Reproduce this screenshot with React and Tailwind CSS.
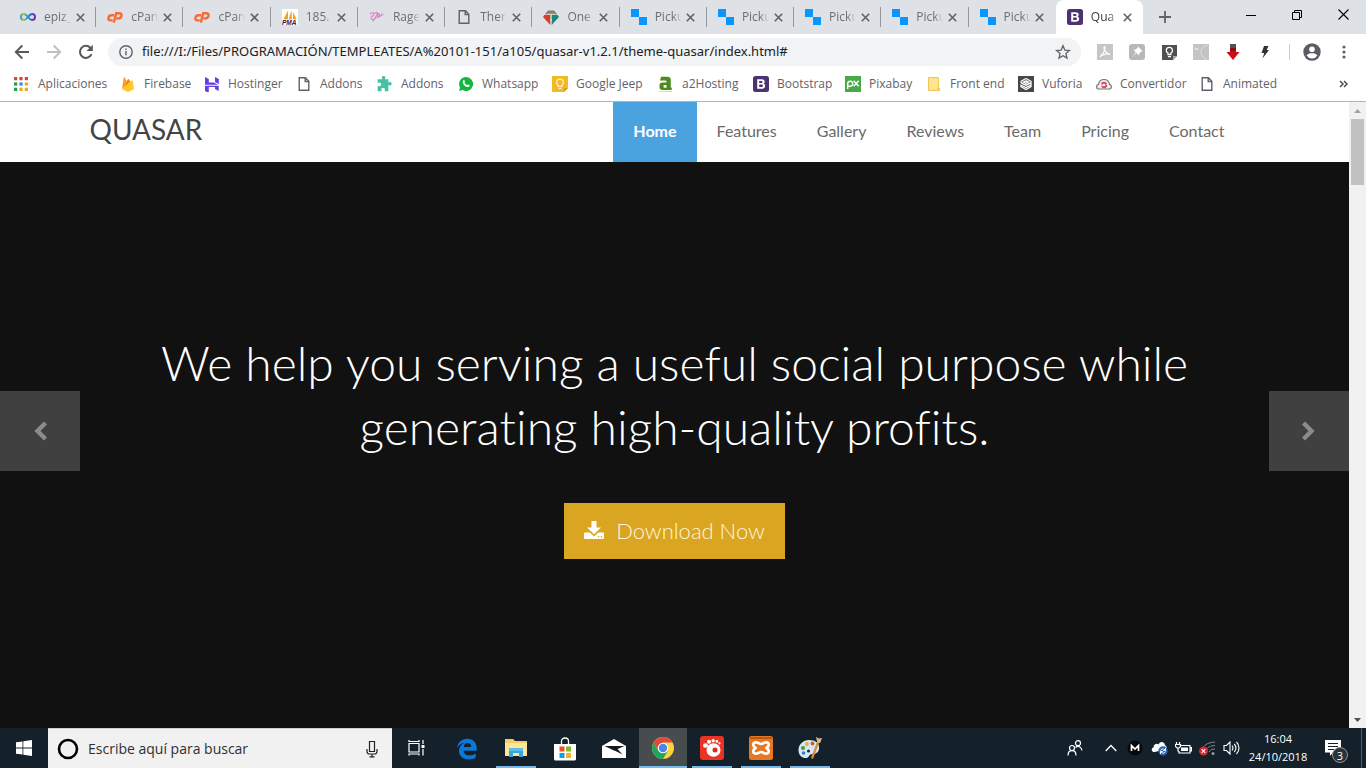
import React from "react";

/* ---------- favicons and small glyphs ---------- */

const Infinity16 = () => (
  <svg width="16" height="16" viewBox="0 0 16 16" fill="none">
    <defs>
      <linearGradient id="inf" x1="0" x2="1">
        <stop offset="0" stopColor="#3f8fd5" />
        <stop offset=".15" stopColor="#b8c92a" />
        <stop offset=".4" stopColor="#2fa5ba" />
        <stop offset=".65" stopColor="#2a6bd0" />
        <stop offset="1" stopColor="#7a2bb8" />
      </linearGradient>
    </defs>
    <path d="M8 8C6.600 6.200 5.600 5 4 5a3 3 0 0 0 0 6c1.600 0 2.600-1.200 4-3s2.400-3 4-3a3 3 0 0 1 0 6c-1.600 0-2.600-1.200-4-3z" stroke="url(#inf)" strokeWidth="2" />
  </svg>
);

const CpanelIcon = () => (
  <svg width="17" height="16" viewBox="0 0 17 16" fill="none" stroke="#f76c35" strokeWidth="2.600">
    <path d="M7.600 6.200H4.800C3 6.200 1.800 7.400 1.500 9c-.3 1.500.5 2.600 2.200 2.600H6" />
    <path d="M7.200 14L9.800 4h3.300c1.800 0 2.700 1.200 2.300 2.800-.4 1.700-1.600 2.700-3.400 2.700h-2" />
  </svg>
);

const PmaIcon = () => (
  <svg width="16" height="16" viewBox="0 0 16 16">
    <rect width="16" height="16" fill="#fff" />
    <path d="M6 1.500L1.500 10H6zM9.500 1L6.800 10h3zM11 3l3.500 7H11z" fill="#f5a11c" />
    <path d="M1 10.500h14l-1 .8H2z" fill="#c9c9dc" />
    <text x="0" y="16" fontSize="6.500" fontWeight="700" fontStyle="italic" fontFamily="Liberation Sans" fill="#22225a">PMA</text>
  </svg>
);

const RageIcon = () => (
  <svg width="16" height="16" viewBox="0 0 16 16" fill="none" stroke="#e07ac4" strokeWidth="1.100">
    <path d="M1 5c2-2 5-1.500 4 .5S1 8 2 9.500 5 12 7 8M6 4c3-1 4 .5 2 2.500S5 11 4 12.500M8 9c3-1 4-3 2-4s-3 1-1 2 4 0 4-2" />
    <path d="M12 4c2 0 3 1 3 3" stroke="#e8b8dc" />
  </svg>
);

const PageIcon = () => (
  <svg width="16" height="16" viewBox="0 0 16 16" fill="none" stroke="#5f6368" strokeWidth="1.400">
    <path d="M3.200 1.700h6.300l3.300 3.500v9.100H3.200z" />
    <path d="M9.200 1.700v3.800h3.600" />
  </svg>
);

const OneIcon = () => (
  <svg width="16" height="16" viewBox="0 0 16 16">
    <path d="M7.300 5v11L0 8l1.300-2z" fill="#d0402b" />
    <path d="M8.700 5v11L16 8l-1.300-2z" fill="#1d8a77" />
    <path d="M2 5l3-3.500h6L14 5H9v5H7V5z" fill="#8c7b6b" />
    <path d="M4 4.800h8v1H8.600V12H7.400V5.800H4z" fill="#e8e2da" />
  </svg>
);

const PickIcon = () => (
  <svg width="16" height="16" viewBox="0 0 16 16" fill="#0a95ff">
    <path d="M0 0h8v8H0zM8 8h8v8H8z" />
  </svg>
);

const BootstrapIcon = () => (
  <svg width="16" height="16" viewBox="0 0 16 16">
    <rect width="16" height="16" rx="2.500" fill="#4b3272" />
    <path fillRule="evenodd" fill="#fff" d="M4.200 3.300h4.600c1.900 0 2.900.9 2.900 2.300 0 .9-.5 1.600-1.300 2 1.100.3 1.700 1.100 1.700 2.300 0 1.800-1.200 2.800-3.300 2.800H4.200zm2 1.600v2h2c.9 0 1.300-.4 1.300-1s-.4-1-1.300-1zm0 3.500V11h2.300c.9 0 1.400-.5 1.400-1.300s-.5-1.300-1.400-1.300z" />
  </svg>
);

const Close8 = () => (
  <svg width="9" height="9" viewBox="0 0 9 9" stroke="#5f6368" strokeWidth="1.600">
    <path d="M.8.8l7.400 7.400M8.200.8L.8 8.200" />
  </svg>
);

const AppsIcon = () => (
  <svg width="14" height="14" viewBox="0 0 13 13">
    <path d="M0 0h3v3H0zM5 0h3v3H5z M10 0h3v3h-3z" fill="#db4437" />
    <path d="M0 5h3v3H0z" fill="#1e9e58" />
    <path d="M5 5h3v3H5z" fill="#4285f4" />
    <path d="M10 5h3v3h-3zM5 10h3v3H5zM10 10h3v3h-3z" fill="#e8ab18" />
    <path d="M0 10h3v3H0z" fill="#1e9e58" />
  </svg>
);

const FirebaseIcon = () => (
  <svg width="16" height="16" viewBox="0 0 16 16">
    <path d="M2 13L3.700 1.500c.1-.5.600-.5.800-.1L6.700 5z" fill="#ffa000" />
    <path d="M2 13L8 3.300c.2-.4.600-.4.800 0L10.500 6z" fill="#f57f17" />
    <path d="M2 13l9.800-8.700c.3-.3.700-.1.800.3L14 13l-5 2.700c-.600.3-1.300.3-1.900 0z" fill="#ffca28" />
  </svg>
);

const HostingerIcon = () => (
  <svg width="16" height="16" viewBox="0 0 16 16" fill="#673de6">
    <path d="M1 1l3.800 2v3.500H10L14 8.800H1zM11 6V1l3.800 2v5z" />
    <path d="M1 15V9.700h13.700V15L11 13v-2H4.800v6z" />
  </svg>
);

const PuzzleIcon = () => (
  <svg width="16" height="16" viewBox="0 0 24 24" fill="#46bfa2">
    <path d="M22 11.500c0-1.500-1.200-2.500-2.500-2.500-1 0-1.500.7-2.500.7V5h-5.200c0-1 .7-1.500.7-2.500C12.500 1 11.400 0 9.900 0S7.300 1 7.300 2.500c0 1 .7 1.500.7 2.500H1v5.500c1.200 0 1.700-.8 2.800-.8 1.500 0 2.600 1.300 2.600 2.800s-1.100 2.800-2.600 2.800c-1.100 0-1.600-.8-2.800-.8V23h6.200c0-1.200-.8-1.700-.8-2.800 0-1.500 1.300-2.600 2.800-2.600s2.800 1.100 2.800 2.600c0 1.100-.8 1.600-.8 2.800H17v-9.500c1 0 1.500.7 2.500.7 1.300 0 2.500-1.200 2.500-2.700z" />
  </svg>
);

const WhatsappIcon = () => (
  <svg width="16" height="16" viewBox="0 0 16 16">
    <path d="M8 1a7 7 0 1 1-3.400 13.100L1 15l1-3.500A7 7 0 0 1 8 1z" fill="#12b73f" />
    <path d="M5.400 4.300c.3-.3.800-.3 1 .1l.6 1.300c.1.300-.5.800-.5 1 .6 1.100 1.400 1.900 2.600 2.400.3 0 .7-.8 1-.7l1.400.7c.3.200.2.900-.1 1.300-.5.600-1.300.8-2.100.6C7 10.400 5.400 8.700 4.800 6.700c-.2-.9 0-1.800.6-2.400z" fill="#fff" />
  </svg>
);

const KeepIcon = () => (
  <svg width="16" height="16" viewBox="0 0 16 16">
    <path d="M0 0h16v12l-4 4H0z" fill="#f5b922" />
    <path d="M12 16v-4h4z" fill="#d99a12" />
    <path d="M6.300 10.500V9.400C5 8.700 4.700 7.700 4.700 6.500a3.300 3.300 0 0 1 6.600 0c0 1.200-.4 2.200-1.600 2.900v1.100zM6.500 12.300h3" fill="none" stroke="#fff3cf" strokeWidth="1.200" />
  </svg>
);

const A2Icon = () => (
  <svg width="16" height="16" viewBox="0 0 16 16">
    <path d="M3 .8h6.500c2.300 0 3.300 1 3.300 3V12l1.500-.7-1 2.700H9.300L4.500 14C2.500 14 1.500 13 1.500 11.300V9.500C1.500 7.500 2.500 6.500 4.700 6.500H8.500V5.300c0-.6-.3-.9-1-.9H2zM8.500 9H6.500c-.7 0-1 .3-1 1v.8c0 .6.300.9 1 .9h2z" fill="#4f8a1e" fillRule="evenodd" />
    <path d="M1 15.500h13" stroke="#ccc" strokeWidth=".8" />
  </svg>
);

const PixabayIcon = () => (
  <svg width="16" height="16" viewBox="0 0 16 16">
    <rect width="16" height="16" fill="#48a947" />
    <path d="M2.700 13V7.500a2.500 2.500 0 1 1 2.500 2.700H3M8.700 4.700l5 5.500M13.700 4.700l-5 5.500" fill="none" stroke="#fff" strokeWidth="1.500" />
  </svg>
);

const FolderIcon = () => (
  <svg width="16" height="16" viewBox="0 0 16 16">
    <path d="M2.500 1.500h10v9.500l1 1.500v2h-11z" fill="#fee391" stroke="#ecc75a" />
    <path d="M11 14.500v-3l1.500-.5 1 1.500v2z" fill="#f2cf63" />
  </svg>
);

const VuforiaIcon = () => (
  <svg width="16" height="16" viewBox="0 0 16 16">
    <rect width="16" height="16" fill="#474749" />
    <path d="M8 2.500l5 2.800v5.400l-5 2.800-5-2.800V9.200L8 11.500l5-2.300M3 6.800l5 2.400 5-2.400M3 5.300v1.500M8 4.800L5.500 6 8 7.200 10.500 6zM3 5.300l5-2.800" fill="none" stroke="#fff" strokeWidth="1.300" />
  </svg>
);

const CloudConvertIcon = () => (
  <svg width="16" height="16" viewBox="0 0 16 16">
    <path d="M3 13C0 13-.1 9 2.400 8.400 3 5.500 5 3.500 8 3.500s5 2 5.600 4.900C16.100 9 16 13 13 13z" fill="#eee" stroke="#77777b" strokeWidth="1.200" />
    <circle cx="8" cy="9" r="2.300" fill="none" stroke="#dc3f50" strokeWidth="1.700" strokeDasharray="5.500 1.500" />
  </svg>
);

/* ---------- data ---------- */

const tabs = [
  ["epiz_", Infinity16],
  ["cPan", CpanelIcon],
  ["cPan", CpanelIcon],
  ["185.", PmaIcon],
  ["Rage", RageIcon],
  ["Ther", PageIcon],
  ["One", OneIcon],
  ["Picku", PickIcon],
  ["Picku", PickIcon],
  ["Picku", PickIcon],
  ["Picku", PickIcon],
  ["Picku", PickIcon],
  ["Qua", BootstrapIcon],
];

const bookmarks = [
  ["Aplicaciones", AppsIcon, "w-[106px]"],
  ["Firebase", FirebaseIcon, "w-[84px]"],
  ["Hostinger", HostingerIcon, "w-[92px]"],
  ["Addons", PageIcon, "w-[81px]"],
  ["Addons", PuzzleIcon, "w-[81px]"],
  ["Whatsapp", WhatsappIcon, "w-[94px]"],
  ["Google Jeep", KeepIcon, "w-[106px]"],
  ["a2Hosting", A2Icon, "w-[95px]"],
  ["Bootstrap", BootstrapIcon, "w-[92px]"],
  ["Pixabay", PixabayIcon, "w-[81px]"],
  ["Front end", FolderIcon, "w-[92px]"],
  ["Vuforia", VuforiaIcon, "w-[78px]"],
  ["Convertidor", CloudConvertIcon, "w-[103px]"],
  ["Animated", PageIcon, "w-[90px]"],
];

const navLinks = ["Home", "Features", "Gallery", "Reviews", "Team", "Pricing", "Contact"];

/* ---------- browser chrome ---------- */

function TabStrip() {
  return (
    <div className="flex h-[34px] shrink-0 items-stretch bg-[#dee1e6] pl-[9px]">
      <div className="flex w-[1134px] shrink">
        {tabs.map(([label, Icon], i) => {
          const active = i === tabs.length - 1;
          const divider = i < tabs.length - 2;
          return (
            <div
              key={i}
              className={
                "flex min-w-0 flex-1 items-center pl-[11px] " +
                (active ? "rounded-t-lg bg-white" : "")
              }
            >
              <button type="button" className="flex h-full min-w-0 flex-1 items-center gap-2 text-left">
                <span className="flex w-4 shrink-0 justify-center"><Icon /></span>
                <span
                  className={
                    "whitespace-nowrap text-[12px] [mask-image:linear-gradient(to_right,#000_18px,transparent_27px)] " +
                    (active ? "text-[#3c4043]" : "text-[#6b6f74]")
                  }
                >
                  {label}
                </span>
              </button>
              <button type="button" aria-label="Cerrar" className="mr-[7px] flex h-4 w-4 shrink-0 items-center justify-center">
                <Close8 />
              </button>
              <span className={"h-5 w-px shrink-0 " + (divider ? "bg-[#94979c]" : "")} />
            </div>
          );
        })}
      </div>
      <button type="button" aria-label="Nueva pestaña" className="ml-4 flex w-3 items-center justify-center">
        <svg width="12" height="12" viewBox="0 0 12 12" stroke="#5f6368" strokeWidth="1.800"><path d="M6 0v12M0 6h12" /></svg>
      </button>
      <div className="ml-auto flex h-[29px]">
        <button type="button" aria-label="Minimizar" className="flex w-[46px] items-center justify-center">
          <svg width="10" height="10" viewBox="0 0 10 10"><path d="M0 5h10v1H0z" /></svg>
        </button>
        <button type="button" aria-label="Restaurar" className="flex w-[46px] items-center justify-center">
          <svg width="10" height="10" viewBox="0 0 10 10" fill="none" stroke="#000"><path d="M.5 2.500h7v7h-7zM2.500 2V.5h7v7H8" /></svg>
        </button>
        <button type="button" aria-label="Cerrar ventana" className="flex w-[46px] items-center justify-center">
          <svg width="11" height="11" viewBox="0 0 11 11" stroke="#000" strokeWidth="1.100"><path d="M.5.5l10 10M10.500.5l-10 10" /></svg>
        </button>
      </div>
    </div>
  );
}

function Toolbar() {
  return (
    <div className="flex h-9 shrink-0 items-center bg-white px-1.5">
      <button type="button" aria-label="Atrás" className="flex w-8 justify-center">
        <svg width="16" height="16" viewBox="0 0 16 16" fill="none" stroke="#55585c" strokeWidth="1.900"><path d="M15 8H2M8.300 1.500L1.800 8l6.500 6.500" /></svg>
      </button>
      <button type="button" aria-label="Adelante" className="flex w-8 justify-center">
        <svg width="16" height="16" viewBox="0 0 16 16" fill="none" stroke="#bdbfc1" strokeWidth="1.900"><path d="M1 8h13M7.700 1.500L14.200 8l-6.500 6.500" /></svg>
      </button>
      <button type="button" aria-label="Recargar" className="flex w-8 justify-center">
        <svg width="16" height="16" viewBox="0 0 16 16">
          <path d="M13.500 10.200A6 6 0 1 1 12.300 3.700" fill="none" stroke="#55585c" strokeWidth="2" />
          <path d="M14.800.8v6.300H8.500z" fill="#55585c" />
        </svg>
      </button>
      <div className="ml-1.5 flex h-7 flex-1 items-center rounded-full bg-[#f1f3f4] pl-[11px] pr-2.5">
        <svg width="14" height="14" viewBox="0 0 14 14" fill="none" stroke="#5f6368" strokeWidth="1.400" className="shrink-0">
          <circle cx="7" cy="7" r="6.200" /><path d="M7 6v4.300M7 3.500v1.400" />
        </svg>
        <input
          type="text"
          aria-label="Dirección"
          defaultValue="file:///I:/Files/PROGRAMACIÓN/TEMPLEATES/A%20101-151/a105/quasar-v1.2.1/theme-quasar/index.html#"
          className="ml-[9px] min-w-0 flex-1 bg-transparent font-['Noto_Sans',sans-serif] text-[13px] text-[#202124] outline-none"
        />
        <button type="button" aria-label="Marcador">
          <svg width="16" height="16" viewBox="0 0 16 16" fill="none" stroke="#5f6368" strokeWidth="1.300"><path d="M8 1.800l1.800 4.300 4.600.4-3.500 3 1.100 4.600L8 11.700l-4 2.400 1.100-4.600-3.500-3 4.600-.4z" /></svg>
        </button>
      </div>
      <div className="ml-2 flex">
        <button type="button" aria-label="PDF" className="flex w-8 justify-center">
          <svg width="16" height="16" viewBox="0 0 16 16"><rect width="16" height="16" fill="#c6c6c6" /><path d="M3 13c2-2 5-6 5-9.500 0-1.500-1.400-1-1 .8C7.500 7 10 10 13 10.200M4.500 11.500c3-1.500 6-2 8.500-1.300" fill="none" stroke="#fff" strokeWidth="1.200" /></svg>
        </button>
        <button type="button" aria-label="Pin" className="flex w-8 justify-center">
          <svg width="16" height="16" viewBox="0 0 16 16"><rect width="16" height="16" rx="3" fill="#b8b8b8" /><path d="M9 2.500l4.500 4.500-1.200.5-2 2v2.300L7.500 9 3 13.200 6.800 8.500 4.300 5.800h2.300l2-2z" fill="#fff" /></svg>
        </button>
        <button type="button" aria-label="Keep" className="flex w-8 justify-center">
          <svg width="16" height="16" viewBox="0 0 16 16"><path d="M1 1h15v11l-4 4H1z" fill="#505050" /><path d="M16 12l-4 4v-4z" fill="#aaa" /><path d="M7 10.500V9C5.700 8.400 5.300 7.500 5.300 6.400a3.100 3.100 0 0 1 6.200 0c0 1.100-.4 2-1.600 2.600v1.500zM7 12.600h3" fill="none" stroke="#fff" strokeWidth="1.300" /></svg>
        </button>
        <button type="button" aria-label="Curva" className="flex w-8 justify-center">
          <svg width="16" height="16" viewBox="0 0 16 16"><rect width="16" height="16" fill="#c4c4c4" /><path d="M1.500 6l2-2 2 2" fill="none" stroke="#fff" /><path d="M15 1C6 3 6 12 13 15" fill="none" stroke="#e0e0e0" /></svg>
        </button>
        <button type="button" aria-label="Descargar" className="flex w-8 justify-center">
          <svg width="16" height="16" viewBox="0 0 16 16"><path d="M5 0h6v4H5z" fill="#54505a" /><path d="M5 4h6v4h3.500L8 16 1.500 8H5z" fill="#cc0d16" /><path d="M5 4h6v3H5z" fill="#8e0a12" /></svg>
        </button>
        <button type="button" aria-label="Rayo" className="flex w-8 justify-center">
          <svg width="16" height="16" viewBox="0 0 16 16"><path d="M7 2h4.500L9.700 6H12L5.500 14.500 7.200 9H4.500z" fill="#333" /></svg>
        </button>
      </div>
      <span className="ml-2 h-4 w-px bg-[#c9cbce]" />
      <button type="button" aria-label="Perfil" className="ml-[13px]">
        <svg width="18" height="18" viewBox="0 0 18 18"><circle cx="9" cy="9" r="8.700" fill="#5a5d63" /><circle cx="9" cy="6.200" r="2.800" fill="#fff" /><path d="M3.600 12.600C4.500 10.800 7 10.200 9 10.200s4.500.6 5.400 2.400A6.500 6.500 0 0 1 9 15.500a6.500 6.500 0 0 1-5.400-2.900z" fill="#fff" /></svg>
      </button>
      <button type="button" aria-label="Menú" className="ml-[7px] flex w-8 justify-center">
        <svg width="4" height="14" viewBox="0 0 4 14" fill="#5f6368"><circle cx="2" cy="2" r="1.600" /><circle cx="2" cy="7" r="1.600" /><circle cx="2" cy="12" r="1.600" /></svg>
      </button>
    </div>
  );
}

function BookmarksBar() {
  return (
    <div className="flex h-8 shrink-0 items-center overflow-hidden border-b border-[#b0b2b4] bg-white pb-[3px] pl-3.5 pr-[18px]">
      {bookmarks.map(([label, Icon, width], i) => (
        <a key={i} href="#" className={"flex shrink-0 items-center gap-2 whitespace-nowrap text-[12px] text-[#5f6368] " + width}>
          <span className="flex w-4 shrink-0"><Icon /></span>
          {label}
        </a>
      ))}
      <button type="button" aria-label="Más marcadores" className="ml-auto">
        <svg width="9" height="8" viewBox="0 0 9 8" fill="none" stroke="#4a4d51" strokeWidth="1.500"><path d="M1 1l3 3-3 3M5 1l3 3-3 3" /></svg>
      </button>
    </div>
  );
}

/* ---------- site ---------- */

const Chevron = ({ flip }) => (
  <svg width="14" height="20" viewBox="0 0 14 20" fill="none" stroke="#8b8b8b" strokeWidth="4.400" className={flip ? "rotate-180" : ""}>
    <path d="M12.500 2L4.500 10l8 8" />
  </svg>
);

function Site() {
  return (
    <div className="flex min-w-0 flex-1 flex-col bg-[#111111] font-['Lato','Open_Sans',sans-serif] [font-variant-ligatures:none]">
      <header className="bg-white">
        <div className="mx-auto flex h-[60px] max-w-[1170px] items-stretch justify-between pr-[15px]">
          <a href="#" className="flex items-center pb-1.5 text-[28px] text-[#444444]">QUASAR</a>
          <nav className="flex">
            {navLinks.map((label, i) => (
              <a
                key={label}
                href="#"
                className={
                  "flex items-center px-5 pb-0.5 text-[16px] " +
                  (i === 0 ? "bg-[#4aa3df] font-bold text-white" : "text-[#6a6a6a]")
                }
              >
                {label}
              </a>
            ))}
          </nav>
        </div>
      </header>
      <main className="flex flex-1 items-center justify-between">
        <button type="button" aria-label="Anterior" className="mb-7 flex h-20 w-20 shrink-0 items-center justify-center bg-[#404040]">
          <Chevron />
        </button>
        <section className="flex flex-col items-center text-center">
          <h1 className="max-w-[1100px] text-[48px] font-light leading-[64px] text-white">
            We help you serving a useful social purpose while generating high-quality profits.
          </h1>
          <a href="#" className="mt-11 flex h-14 items-center gap-3 bg-[#daa520] px-5 pb-0.5 text-[22px] font-light text-[#fff6dd]">
            <svg width="20" height="18" viewBox="0 0 20 18" fill="#fff">
              <path d="M7.500 0h5v6.500H17L10 13.300 3 6.500h4.500z" />
              <path fillRule="evenodd" d="M1 11.500h4.800L10 15.500l4.200-4H19a1 1 0 0 1 1 1V17a1 1 0 0 1-1 1H1a1 1 0 0 1-1-1v-4.500a1 1 0 0 1 1-1zM14 15v1.300h1.300V15zM16.800 15v1.300h1.300V15z" />
            </svg>
            Download Now
          </a>
        </section>
        <button type="button" aria-label="Siguiente" className="mb-7 flex h-20 w-20 shrink-0 items-center justify-center bg-[#404040]">
          <Chevron flip />
        </button>
      </main>
    </div>
  );
}

function ScrollRail() {
  return (
    <div className="flex w-[17px] shrink-0 flex-col items-center justify-between bg-[#f1f1f1]">
      <div className="flex flex-col items-center">
        <span className="flex h-[17px] items-center"><svg width="7" height="4" viewBox="0 0 7 4" fill="#a3a3a3"><path d="M0 4l3.500-4L7 4z" /></svg></span>
        <span className="h-[66px] w-[13px] bg-[#c1c1c1]" />
      </div>
      <span className="flex h-[17px] items-center"><svg width="7" height="4" viewBox="0 0 7 4" fill="#505050"><path d="M0 0l3.500 4L7 0z" /></svg></span>
    </div>
  );
}

/* ---------- taskbar ---------- */

const EdgeIcon = () => (
  <svg width="22" height="22" viewBox="0 0 22 22">
    <path d="M1 10C1.700 4.300 5.800.7 11.200.7c5.800 0 9.500 4 9.500 9.300v2.700H7.600c.2 3 2.600 4.700 5.800 4.700 2.300 0 4.500-.7 6.300-1.900v4.300c-2 1.100-4.300 1.600-6.900 1.600-6 0-9.800-3.400-9.800-8.600 0-3.600 2-6.500 5.200-8C5 5.400 2.600 7.200 1 10zM7.700 9h7.600c0-2.400-1.300-3.900-3.600-3.900C9.500 5.100 8 6.700 7.700 9z" fill="#0a78d7" fillRule="evenodd" />
  </svg>
);
const ExplorerIcon = () => (
  <svg width="22" height="20" viewBox="0 0 22 20">
    <path d="M0 1h8l2 2h12v15H0z" fill="#f3cd6a" />
    <path d="M0 5h22v13H0z" fill="#fde698" />
    <path d="M4 10h14v9h-4v-4H8v4H4z" fill="#35a7de" />
    <path d="M4 10h14v3H4z" fill="#5bbdea" />
  </svg>
);
const StoreIcon = () => (
  <svg width="24" height="24" viewBox="0 0 24 24">
    <path d="M8.500 8V4c0-4 7-4 7 0v4" fill="none" stroke="#fff" strokeWidth="1.300" />
    <path d="M1 7h22v15c0 1-1 1.500-2 1.500H3c-1 0-2-.5-2-1.500z" fill="#fff" />
    <path d="M6.500 9.500h5v5h-5z" fill="#f04e23" /><path d="M13 9.500h5v5h-5z" fill="#7db928" />
    <path d="M6.500 16h5v5h-5z" fill="#12a0e8" /><path d="M13 16h5v5h-5z" fill="#f9b513" />
  </svg>
);
const MailIcon = () => (
  <svg width="24" height="20" viewBox="0 0 24 20">
    <path d="M0 7L12 0l12 7v12H0z" fill="#fff" />
    <path d="M2.500 7h20L12 11.500z" fill="#14191d" /><path d="M11.500 11l9 4.500-5.500-6z" fill="#14191d" />
  </svg>
);
const ChromeIcon = () => (
  <svg width="22" height="22" viewBox="0 0 22 22">
    <circle cx="11" cy="11" r="11" fill="#fdd23e" />
    <path d="M1.500 5.500A11 11 0 0 1 20.500 5.500H11L6.200 13.700z" fill="#dd4b3e" />
    <path d="M1.500 5.500A11 11 0 0 0 11 22l4.800-8.300H6.200z" fill="#1da362" />
    <circle cx="11" cy="11" r="5.300" fill="#fff" /><circle cx="11" cy="11" r="4.200" fill="#4a86ea" />
  </svg>
);
const GomIcon = () => (
  <svg width="24" height="24" viewBox="0 0 24 24">
    <rect width="24" height="24" rx="3" fill="#ea3324" />
    <ellipse cx="13.500" cy="14" rx="7" ry="6.700" fill="#fff" /><circle cx="15" cy="14" r="2.500" fill="#d92c20" />
    <g fill="#fff"><ellipse cx="5.500" cy="9.500" rx="2.500" ry="2.200" /><circle cx="9" cy="5.800" r="2" /><circle cx="13.200" cy="4.800" r="1.700" /><circle cx="16.900" cy="5.400" r="1.400" /><circle cx="19.500" cy="7.300" r="1.100" /></g>
  </svg>
);
const XamppIcon = () => (
  <svg width="24" height="24" viewBox="0 0 24 24">
    <rect width="24" height="24" rx="2.500" fill="#e87722" /><path d="M1 1h22v2H1z" fill="#b95a18" />
    <path d="M8 6.500C5.500 5.800 4 7 4.300 9c.2 1.500 1.200 2 2.200 3-1 1-2 1.500-2.200 3C4 17 5.500 18.200 8 17.500c1.500-.3 2-1.500 4-1.500s2.500 1.200 4 1.500c2.500.7 4-.5 3.700-2.500-.2-1.500-1.200-2-2.200-3 1-1 2-1.500 2.200-3 .3-2-1.200-3.200-3.700-2.500-1.500.3-2 1.500-4 1.500s-2.500-1.200-4-1.500z" fill="none" stroke="#fff" strokeWidth="2.700" />
  </svg>
);
const PaintIcon = () => (
  <svg width="24" height="24" viewBox="0 0 24 24">
    <path d="M11 4C5 4 .5 8.500.5 14S4 22 8 22c3 0 2.500-2.500 4.500-3.500S20 19 21 13 17 4 11 4z" fill="#d7e6f3" />
    <circle cx="5" cy="12" r="2" fill="#4a9a3c" /><circle cx="9" cy="8" r="1.900" fill="#e8b02a" /><circle cx="14.500" cy="7.500" r="1.900" fill="#d65832" /><circle cx="5.500" cy="17" r="1.800" fill="#3b7dc8" /><circle cx="10.500" cy="15" r="1.500" fill="#18222a" />
    <path d="M20.500 5L14 22.500" stroke="#d98a34" strokeWidth="2.200" /><path d="M19.300 6.500L18 1l3 1.500L24 2l-1.800 5z" fill="#d8b98b" />
  </svg>
);

const pinned = [
  ["Microsoft Edge", EdgeIcon, ""],
  ["Explorador de archivos", ExplorerIcon, "border-b-2 border-[#76b9ed]"],
  ["Microsoft Store", StoreIcon, ""],
  ["Correo", MailIcon, ""],
  ["Google Chrome", ChromeIcon, "border-b-2 border-[#76b9ed] bg-[#474c4f]"],
  ["Gom Player", GomIcon, "border-b-2 border-[#76b9ed]"],
  ["XAMPP", XamppIcon, "border-b-2 border-[#76b9ed]"],
  ["Paint", PaintIcon, "border-b-2 border-[#76b9ed]"],
];

function Taskbar() {
  return (
    <footer className="flex h-10 shrink-0 items-stretch bg-[#14212a] text-white">
      <button type="button" aria-label="Inicio" className="flex w-12 shrink-0 items-center justify-center">
        <svg width="16" height="16" viewBox="0 0 16 16" fill="#fff"><path d="M0 2.300L6.500 1.400v6.200H0zM7.300 1.300L16 0v7.600H7.300zM0 8.400h6.500v6.200L0 13.700zM7.300 8.400H16V16l-8.700-1.300z" /></svg>
      </button>
      <label className="flex w-[344px] shrink-0 items-center border-t border-[#cfcfcf] bg-[#f1f1f1] pl-[9px] pr-3.5">
        <svg width="22" height="22" viewBox="0 0 22 22" className="shrink-0"><circle cx="11" cy="11" r="9" fill="none" stroke="#000" strokeWidth="2.600" /></svg>
        <input type="text" aria-label="Buscar" placeholder="Escribe aquí para buscar" className="ml-[9px] min-w-0 flex-1 bg-transparent text-[14px] text-[#2f2f2f] outline-none placeholder:text-[#2f2f2f]" />
        <svg width="12" height="18" viewBox="0 0 12 18" fill="none" stroke="#222" strokeWidth="1.200"><path d="M3.500 1.500h5v10h-5zM1 9v2.500C1 13 2 14 3.500 14h5c1.500 0 2.500-1 2.500-2.500V9M6 14v3M3.500 16.800h5" /></svg>
      </label>
      <button type="button" aria-label="Vista de tareas" className="flex w-12 shrink-0 items-center justify-center">
        <svg width="17" height="16" viewBox="0 0 17 16" fill="none" stroke="#fff" strokeWidth="1.200"><path d="M1 3.500h10v8.500H1zM1 0v1.500h10V0M1 15.500V14h10v1.500M15 0v4M15 9v6.500" /><path d="M13.500 5h3v3h-3z" fill="#fff" stroke="none" /></svg>
      </button>
      <div className="ml-[3px] flex gap-[9px] pl-1">
        {pinned.map(([label, Icon, style]) => (
          <button key={label} type="button" aria-label={label} className={"flex items-center justify-center border-t-2 border-t-transparent " + (label === "Google Chrome" ? "-mx-1 w-12 bg-clip-border " : "w-10 ") + style}>
            <Icon />
          </button>
        ))}
      </div>
      <div className="ml-auto flex shrink-0 items-center">
        <button type="button" aria-label="Contactos" className="flex w-6 justify-center">
          <svg width="16" height="16" viewBox="0 0 16 16" fill="none" stroke="#fff" strokeWidth="1.200"><circle cx="5" cy="8" r="2.500" /><path d="M1 15.500c0-6.500 8-6.500 8 0" /><circle cx="11" cy="3.200" r="2.500" /><path d="M8.500 7.500c2.500-2.500 6-.7 6.500 3" /></svg>
        </button>
        <button type="button" aria-label="Iconos ocultos" className="ml-3 flex w-6 justify-center">
          <svg width="12" height="8" viewBox="0 0 12 8" fill="none" stroke="#fff" strokeWidth="1.300"><path d="M.7 7L6 1.500 11.300 7" /></svg>
        </button>
        <button type="button" aria-label="Mega" className="flex w-6 justify-center">
          <svg width="16" height="16" viewBox="0 0 16 16"><circle cx="8" cy="8" r="7.500" fill="#090909" /><path d="M4.500 11V5.500L8 9l3.500-3.500V11" fill="none" stroke="#fff" strokeWidth="1.700" /></svg>
        </button>
        <button type="button" aria-label="OneDrive" className="flex w-6 justify-center">
          <svg width="17" height="15" viewBox="0 0 17 15"><path d="M3.500 11C0 11 0 7 2.500 6.500 2.500 3 6 2 7.500 3.500 9-.5 14 .5 14 4.500c2 .5 2 3 1 4z" fill="#fff" /><circle cx="12" cy="10" r="4.700" fill="#2864b4" /><path d="M9.500 9.500c1-2 3-2 4.500-.5M14.500 10.500c-1 2-3 2-4.500.5M14.500 7v2.500h-2.300M9.500 13v-2.500h2.300" fill="none" stroke="#fff" /></svg>
        </button>
        <button type="button" aria-label="Batería" className="flex w-6 justify-center">
          <svg width="17" height="13" viewBox="0 0 17 13" fill="none" stroke="#fff" strokeWidth="1.200"><path d="M6 3.500h9v7.500H4V9M15 5.500h1.400v3.500H15M1.500 0v2.500M4.500 0v2.500M.5 2.500h5v2L4 6H2L.5 4.500zM3 6v3h1" /><path d="M6 5.500h7v3.500H6z" fill="#fff" stroke="none" /></svg>
        </button>
        <button type="button" aria-label="Red" className="flex w-6 justify-center">
          <svg width="16" height="15" viewBox="0 0 16 15" fill="none"><path d="M4 7c2-4 6-5.500 12-6M7 9c2-3 4-4 9-4.500M10 11c1-2 3-3 6-3" stroke="#858a8e" /><circle cx="14" cy="12.500" r="1.500" fill="#999" /><circle cx="4.500" cy="10" r="4.500" fill="#d9272e" /><path d="M2.700 8.200l3.600 3.600M6.300 8.200l-3.600 3.600" stroke="#fff" strokeWidth="1.200" /></svg>
        </button>
        <button type="button" aria-label="Volumen" className="flex w-6 justify-center">
          <svg width="17" height="14" viewBox="0 0 17 14" fill="none" stroke="#fff" strokeWidth="1.100"><path d="M1 4.500h2.500L7 1v12L3.500 9.500H1zM9 4.700c1.300 1.300 1.300 3.300 0 4.600M11.200 3c2.300 2.300 2.300 5.700 0 8M13.500 1c3.300 3.300 3.300 8.700 0 12" /></svg>
        </button>
        <time className="flex w-[70px] flex-col text-center text-[11px] leading-[18px]">
          <span>16:04</span>
          <span>24/10/2018</span>
        </time>
        <button type="button" aria-label="Notificaciones" className="relative ml-3 flex w-6 justify-start">
          <svg width="16" height="16" viewBox="0 0 16 16"><path d="M0 0h16v12.500H8L5 16v-3.500H0z" fill="#fff" /><path d="M3 3.500h10M3 6.500h10M3 9.500h6" stroke="#14212a" strokeWidth="1.200" /></svg>
          <span className="absolute left-[7px] top-[7px] flex h-4 w-4 items-center justify-center rounded-full border border-[#909496] bg-[#2b3338] text-[11px] leading-none">3</span>
        </button>
        <span className="ml-3 mr-1 h-10 w-px bg-[#54606a]" />
      </div>
    </footer>
  );
}

export default function App() {
  return (
    <div className="flex h-screen flex-col overflow-hidden bg-white font-['Open_Sans','Noto_Sans',sans-serif]">
      <TabStrip />
      <Toolbar />
      <BookmarksBar />
      <div className="flex min-h-0 flex-1">
        <Site />
        <ScrollRail />
      </div>
      <Taskbar />
    </div>
  );
}
